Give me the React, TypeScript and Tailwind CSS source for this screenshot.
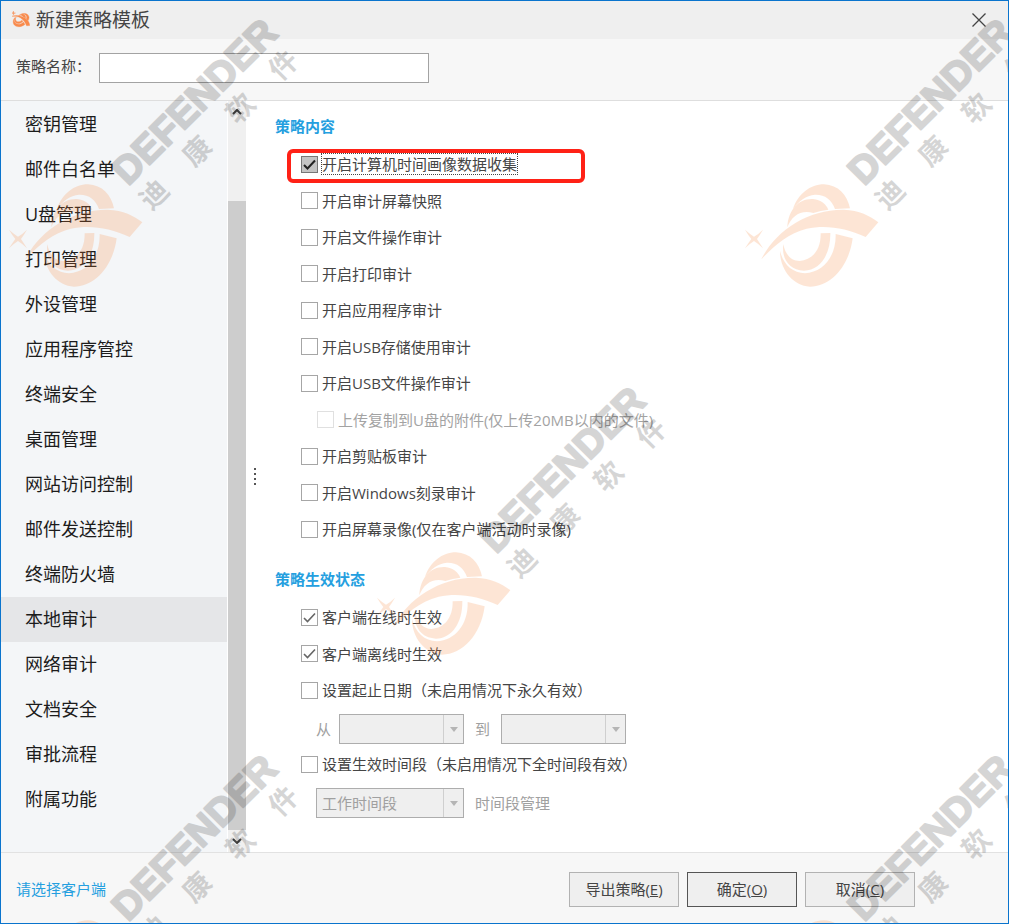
import { useState } from 'react'
import clsx from 'clsx'

const NAV_ITEMS = [
  '密钥管理',
  '邮件白名单',
  'U盘管理',
  '打印管理',
  '外设管理',
  '应用程序管控',
  '终端安全',
  '桌面管理',
  '网站访问控制',
  '邮件发送控制',
  '终端防火墙',
  '本地审计',
  '网络审计',
  '文档安全',
  '审批流程',
  '附属功能',
]

type Option = {
  label: string
  checked?: boolean
  nested?: boolean
  highlight?: boolean
}

const AUDIT_OPTIONS: Option[] = [
  { label: '开启计算机时间画像数据收集', checked: true, highlight: true },
  { label: '开启审计屏幕快照' },
  { label: '开启文件操作审计' },
  { label: '开启打印审计' },
  { label: '开启应用程序审计' },
  { label: '开启USB存储使用审计' },
  { label: '开启USB文件操作审计' },
  { label: '上传复制到U盘的附件(仅上传20MB以内的文件)', nested: true },
  { label: '开启剪贴板审计' },
  { label: '开启Windows刻录审计' },
  { label: '开启屏幕录像(仅在客户端活动时录像)' },
]

const STATUS_OPTIONS: Option[] = [
  { label: '客户端在线时生效', checked: true },
  { label: '客户端离线时生效', checked: true },
  { label: '设置起止日期（未启用情况下永久有效）' },
]

const WATERMARKS = [
  { x: 0, y: 0 },
  { x: 736, y: 0 },
  { x: 368, y: 368 },
  { x: 0, y: 736 },
  { x: 736, y: 736 },
]

const WATERMARK_CHARS = ['迪', '康', '软', '件']

function LogoShape() {
  return (
    <>
      <path d="M48 689 Q64 703 75 710 Q88 703 102 689 Q92 706 84 717 Q92 729 102 745 Q88 731 75 723 Q62 731 48 745 Q58 729 67 717 Q58 706 48 689Z" />
      <path d="M192 627 C207 582 244 553 285 553 C328 555 355 585 363 625 L318 627 C308 598 287 583 258 584 C231 586 209 604 192 627Z" />
      <path d="M175 682 C178 628 210 595 252 597 C276 599 291 612 298 629 Q275 631 253 639 C215 629 188 648 175 682Z" />
      <path d="M97 778 C140 690 240 627 345 629 C390 631 423 647 448 667 L410 711 C350 683 290 674 233 686 C175 700 133 740 97 778Z" />
      <path d="M275 700 L304 699 C305 765 272 812 225 812 C181 810 157 777 163 733 C169 765 187 783 212 783 C250 780 276 750 275 700Z" />
      <path d="M320 702 L371 715 C360 800 305 860 243 860 C190 857 153 807 153 753 C163 793 190 819 228 820 C282 817 322 770 320 702Z" />
    </>
  )
}

function Watermark({ x, y }: { x: number; y: number }) {
  return (
    <g transform={`translate(${x} ${y})`}>
      <g transform="translate(-8 -1) scale(0.3333)" fill="#fa8232" opacity="0.2">
        <LogoShape />
      </g>
      <g transform="translate(129 185) rotate(-45)" opacity="0.16">
        <text
          x="-2"
          y="-1"
          fontSize="39"
          stroke="#000"
          strokeWidth="2"
          strokeLinejoin="round"
          className="font-['Liberation_Sans',sans-serif] font-bold"
        >
          DEFENDER
        </text>
        {WATERMARK_CHARS.map((char, i) => (
          <text key={char} x={11 + i * 61} y="33" fontSize="28" textAnchor="middle" className="font-bold">
            {char}
          </text>
        ))}
      </g>
    </g>
  )
}

function CheckRow({ label, checked = false, nested = false, highlight = false }: Option) {
  const [on, setOn] = useState(checked)

  return (
    <li className={clsx('relative flex h-9 items-center even:h-[37px]', nested ? 'pl-[42px]' : 'pl-[26px]')}>
      <label className={clsx('flex items-center gap-[3px]', nested ? 'text-[#a3a3a3]' : 'text-[#454545]')}>
        <span className="grid size-[17px]">
          <input
            type="checkbox"
            checked={on}
            disabled={nested}
            onChange={e => setOn(e.target.checked)}
            className={clsx(
              'col-start-1 row-start-1 size-[17px] appearance-none border',
              highlight ? 'border-[#777] bg-[#c4c4c4]' : 'bg-white',
              !highlight && (nested ? 'border-[#e0e0e0]' : 'border-[#a6a6a6]'),
            )}
          />
          {on && (
            <svg
              viewBox="0 0 17 17"
              fill="none"
              stroke={highlight ? '#222' : '#666'}
              strokeWidth={highlight ? 2 : 1.6}
              className="pointer-events-none col-start-1 row-start-1"
            >
              <path d="M3 9 L6.5 12.5 L14 4.5" />
            </svg>
          )}
        </span>
        <span
          className={clsx('border border-dotted leading-5', highlight ? 'border-[#444]' : 'border-transparent')}
        >
          {label}
        </span>
      </label>
      {highlight && (
        <span className="pointer-events-none absolute top-[3px] left-3 h-[34px] w-[298px] rounded-md border-4 border-[#ff2116]" />
      )}
    </li>
  )
}

function DropDown({ id, className, value = '' }: { id: string; className: string; value?: string }) {
  return (
    <div className={clsx('relative h-[30px]', className)}>
      <select
        id={id}
        disabled
        defaultValue={value}
        aria-label={value || undefined}
        className="size-full appearance-none border border-[#adadad] bg-[#efefef] pl-[5px] text-[#a0a0a0] opacity-100"
      >
        <option value={value}>{value}</option>
      </select>
      <span className="pointer-events-none absolute inset-y-px right-px flex w-5 items-center justify-center border-l border-[#cfcfcf]">
        <svg viewBox="0 0 8 5" className="w-2" fill="#b5b5b5">
          <path d="M0 0H8L4 5Z" />
        </svg>
      </span>
    </div>
  )
}

function FooterButton({ text, hotkey, primary = false }: { text: string; hotkey: string; primary?: boolean }) {
  return (
    <button
      type="button"
      className={clsx(
        'h-[35px] w-[110px] border bg-[#efefef] text-[#454545]',
        primary ? 'border-[#555]' : 'border-[#b2b2b2]',
      )}
    >
      {text}(<u>{hotkey}</u>)
    </button>
  )
}

export default function App() {
  const [active, setActive] = useState('本地审计')

  return (
    <div
      lang="zh-CN"
      className="relative flex min-h-screen flex-col overflow-hidden border border-[#0a74cd] bg-white font-['Open_Sans','Noto_Sans_CJK_SC',sans-serif] text-[15px] leading-5 text-[#454545]"
    >
      {/* Title bar */}
      <header className="flex h-[38px] items-center bg-[#efefef] pr-[22px] pb-px pl-[11px]">
        <svg viewBox="95 545 330 310" className="mr-[6px] w-[18px]" fill="#f98a4b" stroke="#f98a4b" strokeWidth="6">
          <g transform="rotate(45 260 706)">
            <LogoShape />
          </g>
        </svg>
        <h1 className="flex-1 text-[19px]">新建策略模板</h1>
        <button type="button" aria-label="关闭">
          <svg viewBox="0 0 14 14" className="size-[14px]" fill="none" stroke="#444" strokeWidth="1.3">
            <path d="M0.5 0.5 L13.5 13.5 M13.5 0.5 L0.5 13.5" />
          </svg>
        </button>
      </header>

      <div className="flex h-[62px] items-start border-b border-[#dedede] bg-[#f7f7f7] pt-[14px] pl-[15px]">
        <label htmlFor="policy-name" className="w-[83px] leading-[26px]">
          策略名称：
        </label>
        <input
          id="policy-name"
          type="text"
          className="h-[30px] w-[330px] border border-[#a3a3a3] bg-white px-2"
        />
      </div>

      <div className="flex flex-1">
        {/* Categories */}
        <nav className="w-[226px] bg-[#f4f6f8] pt-px">
          {NAV_ITEMS.map(item => (
            <button
              key={item}
              type="button"
              onClick={() => setActive(item)}
              className={clsx(
                'block h-[45px] w-full pb-[2px] pl-6 text-left text-[18px] text-[#1c1c1c]',
                item === active && 'bg-[#e5e6e8]',
              )}
            >
              {item}
            </button>
          ))}
        </nav>

        <div className="ml-px flex w-[18px] flex-col items-center bg-[#f0f0f0]">
          <svg viewBox="0 0 10 6" className="my-2 w-[10px]" fill="none" stroke="#444" strokeWidth="2">
            <path d="M1 5 L5 1 L9 5" />
          </svg>
          <div className="mt-[78px] w-full flex-1 bg-[#cdcdcd]" />
          <svg viewBox="0 0 10 6" className="my-2 w-[10px]" fill="none" stroke="#444" strokeWidth="2">
            <path d="M1 1 L5 5 L9 1" />
          </svg>
        </div>

        <div className="flex w-[18px] flex-col items-center justify-center gap-[3px]">
          <i className="size-[2px] bg-[#555]" />
          <i className="size-[2px] bg-[#555]" />
          <i className="size-[2px] bg-[#555]" />
          <i className="size-[2px] bg-[#555]" />
        </div>

        {/* Policy settings */}
        <main className="flex-1 pt-[15px] pl-[11px]">
          <h2 className="mb-[10px] font-bold text-[#259fdf]">策略内容</h2>
          <ul>
            {AUDIT_OPTIONS.map(option => (
              <CheckRow key={option.label} {...option} />
            ))}
          </ul>

          <h2 className="mt-[22px] mb-[10px] font-bold text-[#259fdf]">策略生效状态</h2>
          <ul>
            {STATUS_OPTIONS.map(option => (
              <CheckRow key={option.label} {...option} />
            ))}
          </ul>
          <div className="mt-[6px] mb-[2px] flex items-center pl-[41px] text-[#a0a0a0]">
            <label htmlFor="date-from" className="w-[23px]">
              从
            </label>
            <DropDown id="date-from" className="w-[125px]" />
            <label htmlFor="date-to" className="ml-[11px] w-[26px]">
              到
            </label>
            <DropDown id="date-to" className="w-[125px]" />
          </div>
          <ul>
            <CheckRow label="设置生效时间段（未启用情况下全时间段有效）" />
          </ul>
          <div className="mt-[6px] flex items-center pl-[41px]">
            <DropDown id="period" className="w-[148px]" value="工作时间段" />
            <a href="#periods" className="ml-[11px] text-[#a0a0a0]">
              时间段管理
            </a>
          </div>
        </main>
      </div>

      <footer className="flex h-[71px] items-center gap-2 border-t border-[#e2e2e2] bg-[#f7f7f7] pt-[2px] pr-[93px] pl-[15px]">
        <a href="#clients" className="mr-auto text-[#259fdf]">
          请选择客户端
        </a>
        <FooterButton text="导出策略" hotkey="E" />
        <FooterButton text="确定" hotkey="O" primary />
        <FooterButton text="取消" hotkey="C" />
      </footer>

      <svg aria-hidden="true" className="pointer-events-none absolute inset-0 size-full">
        {WATERMARKS.map(mark => (
          <Watermark key={`${mark.x}-${mark.y}`} {...mark} />
        ))}
      </svg>
    </div>
  )
}
